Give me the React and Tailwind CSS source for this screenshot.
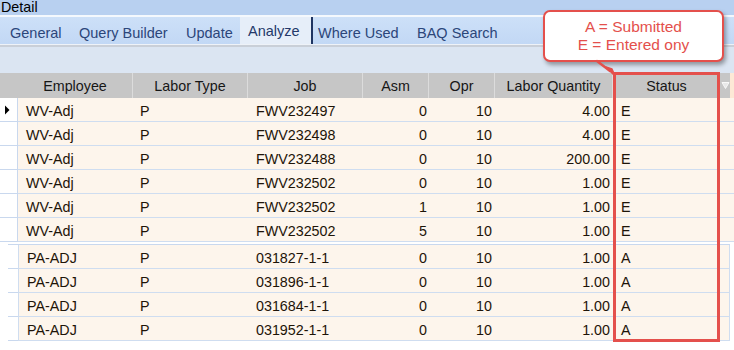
import React from "react";

const cols = [
  { key: "emp", label: "Employee", w: "w-[115px]", cell: "pl-[8px] text-left" },
  { key: "type", label: "Labor Type", w: "w-[115px]", cell: "pl-[7px] text-left" },
  { key: "job", label: "Job", w: "w-[115px]", cell: "pl-[8px] text-left" },
  { key: "asm", label: "Asm", w: "w-[66px]", cell: "pr-[2px] text-right" },
  { key: "opr", label: "Opr", w: "w-[66px]", cell: "pr-[3px] text-right" },
  { key: "qty", label: "Labor Quantity", w: "w-[118px]", cell: "pr-[3px] text-right" },
  { key: "status", label: "Status", w: "w-[107px]", cell: "pl-[8px] text-left" },
];

const entered = [
  ["WV-Adj", "P", "FWV232497", "0", "10", "4.00", "E"],
  ["WV-Adj", "P", "FWV232498", "0", "10", "4.00", "E"],
  ["WV-Adj", "P", "FWV232488", "0", "10", "200.00", "E"],
  ["WV-Adj", "P", "FWV232502", "0", "10", "1.00", "E"],
  ["WV-Adj", "P", "FWV232502", "1", "10", "1.00", "E"],
  ["WV-Adj", "P", "FWV232502", "5", "10", "1.00", "E"],
];

const submitted = [
  ["PA-ADJ", "P", "031827-1-1", "0", "10", "1.00", "A"],
  ["PA-ADJ", "P", "031896-1-1", "0", "10", "1.00", "A"],
  ["PA-ADJ", "P", "031684-1-1", "0", "10", "1.00", "A"],
  ["PA-ADJ", "P", "031952-1-1", "0", "10", "1.00", "A"],
];

const tabs = [
  { label: "General", cls: "w-[69px] pl-[10px]" },
  { label: "Query Builder", cls: "w-[108px] pl-[10px]" },
  { label: "Update", cls: "w-[63px] pl-[9px]" },
  { label: "Analyze", active: true, cls: "w-[73px] pl-[8px]" },
  { label: "Where Used", cls: "w-[95px] pl-[5px]" },
  { label: "BAQ Search", cls: "w-[100px] pl-[9px]" },
];

function Row({ data, first, second }) {
  return (
    <div className="flex h-[24px]">
      {second ? (
        <div className="ml-[8px] w-[10px] shrink-0 bg-white border-b border-[#c9d8ee]" />
      ) : (
        <div className="w-[18px] shrink-0 flex items-center bg-white border-b border-r border-[#c9d8ee]">
          {first && (
            <svg width="17" height="24" viewBox="0 0 17 24">
              <path d="M5 7.5 L9.5 12 L5 16.5 Z" fill="#000" />
            </svg>
          )}
        </div>
      )}
      <div
        className={`flex bg-[#fdf5ec] border-b border-[#cfddf0] ${
          second ? "w-[712px] border-x border-x-[#cfddf0]" : "w-[716px]"
        }`}
      >
        {cols.map((c, i) => (
          <div
            key={c.key}
            className={`${second && i === 0 ? "w-[114px]" : c.w} shrink-0 leading-[24px] pt-[1px] text-[#1e1408] ${c.cell}`}
          >
            {data[i]}
          </div>
        ))}
      </div>
    </div>
  );
}

export default function App() {
  return (
    <div className="relative w-[734px] h-[350px] overflow-hidden bg-white font-['Liberation_Sans',Arial,sans-serif] text-[14.3px]">
      {/* title */}
      <div className="h-[15px] bg-[#b8d0f0] text-black leading-[14px] pl-[1px]">Detail</div>
      <div className="h-[2px] bg-[#f4f8fd]" />

      {/* tab strip */}
      <div className="flex h-[27px] bg-gradient-to-b from-[#cde0f8] to-[#c2d8f5] text-[#2c467a] text-[14.5px]">
        {tabs.map((t) =>
          t.active ? (
            <div
              key={t.label}
              className={`h-[27px] shrink-0 pt-[4px] bg-[#e6eef9] border-r-2 border-[#1e3462] text-[#24396a] ${t.cls}`}
            >
              {t.label}
            </div>
          ) : (
            <div key={t.label} className={`shrink-0 pt-[6px] ${t.cls}`}>
              {t.label}
            </div>
          )
        )}
      </div>
      <div className="h-px bg-[#eef2f8]" />
      <div className="h-[2px] bg-[#c9cfd8]" />

      {/* toolbar */}
      <div className="h-[26px] bg-[#dbe5f2]" />

      {/* header */}
      <div className="flex h-[25px]">
        <div className="w-[18px] shrink-0 bg-[#c6c6c6]" />
        <div className="flex w-[712px] bg-[#c6c6c6] text-[#161616]">
          {cols.map((c, i) => (
            <div
              key={c.key}
              className={`${c.w} shrink-0 text-center leading-[25px] pt-[1px] ${
                i < cols.length - 1 ? "border-r border-[#dcdcdc]" : ""
              }`}
            >
              {c.label}
            </div>
          ))}
          <div className="flex-1 flex items-center justify-center">
            <svg width="9" height="9" viewBox="0 0 9 9">
              <path d="M1 1.5 L8 1.5 L4.5 7.5 Z" fill="#e8e8e8" stroke="#f8f8f8" strokeWidth="1" />
            </svg>
          </div>
        </div>
        <div className="flex-1 bg-[#fde9d6]" />
      </div>

      {/* entered group */}
      <div>
        {entered.map((r, i) => (
          <Row key={i} data={r} first={i === 0} />
        ))}
      </div>
      <div className="h-[2px] bg-white" />
      <div className="ml-[8px] w-[722px] h-px bg-[#c9d8ee]" />

      {/* submitted group */}
      <div>
        {submitted.map((r, i) => (
          <Row key={i} data={r} second />
        ))}
      </div>

      {/* highlight box over status column */}
      <div className="absolute left-[613px] top-[72px] w-[107px] h-[270px] border-[3px] border-[#e4504c]" />

      {/* callout */}
      <div className="absolute left-[543px] top-[10px] w-[181px] h-[52px] rounded-[7px] border-2 border-[#e4504c] bg-white shadow-[2px_3px_4px_rgba(0,0,0,0.35)] flex flex-col items-center justify-center text-[15.5px] leading-[18px] text-[#e4504c]">
        <div>A = Submitted</div>
        <div>E = Entered ony</div>
      </div>
      <svg className="absolute left-[590px] top-[58px]" width="30" height="22" viewBox="0 0 30 22">
        <path d="M7 3 L20 13" stroke="#e4504c" strokeWidth="2.5" strokeLinecap="round" />
        <path d="M16 9 L25 18 L22 11 Z" fill="#e4504c" stroke="#e4504c" strokeWidth="1.5" strokeLinejoin="round" />
      </svg>
    </div>
  );
}
